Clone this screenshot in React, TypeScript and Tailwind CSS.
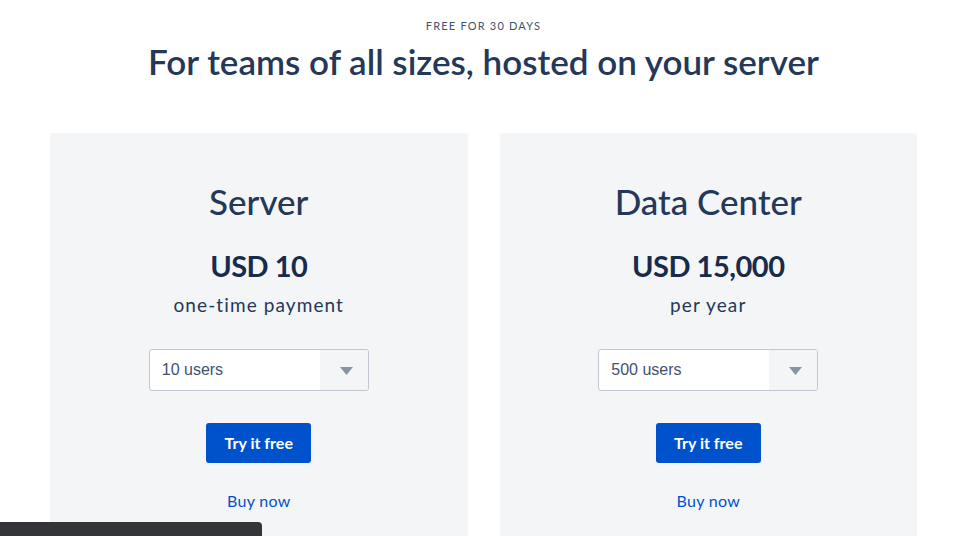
const plans = [
  { name: "Server", price: "USD 10", term: "one-time payment", users: "10 users" },
  { name: "Data Center", price: "USD 15,000", term: "per year", users: "500 users" },
];

function PlanCard({ plan }: { plan: (typeof plans)[number] }) {
  return (
    <div className="flex h-[420px] flex-col items-center rounded-[3px] bg-[#f4f5f7] pt-[42px]">
      <h2 className="text-[35px] font-medium leading-[52px] text-[#253858]">{plan.name}</h2>
      <div className="mt-[18px] text-[29px] font-bold leading-[42px] tracking-[-0.5px] text-[#172b4d]">{plan.price}</div>
      <div className="mt-[4px] text-[19px] leading-[28px] tracking-[1.1px] text-[#253858]">{plan.term}</div>
      <div className="mt-[30px] flex h-[42px] w-[220px] overflow-hidden rounded-[3px] border border-[#c1c7d0] bg-white">
        <div className="flex flex-1 items-center pl-[12px] font-['Liberation_Sans',Arial,sans-serif] text-[16px] text-[#42526e]">
          {plan.users}
        </div>
        <div className="flex w-[48px] items-center justify-center bg-[#f4f5f7] pl-[5px] pt-[2px]">
          <svg width="13" height="8" viewBox="0 0 13 8">
            <path d="M0 0h13L6.5 8z" fill="#8993a4" />
          </svg>
        </div>
      </div>
      <button className="mt-[32px] h-[40px] w-[105px] rounded-[3px] bg-[#0052cc] text-[16px] font-bold text-white">
        Try it free
      </button>
      <a className="mt-[26px] text-[16px] tracking-[0.3px] text-[#0052cc]">Buy now</a>
    </div>
  );
}

export default function App() {
  return (
    <div className="relative h-[536px] overflow-hidden bg-white font-['Lato','Open_Sans',sans-serif]">
      <div className="pt-[19px] text-center">
        <div className="text-[11px] uppercase leading-[14px] tracking-[1.2px] text-[#42526e]">Free for 30 days</div>
        <h1 className="mt-[4px] text-[35px] font-semibold leading-[48px] text-[#253858]">
          For teams of all sizes, hosted on your server
        </h1>
      </div>
      <div className="mt-[48px] grid grid-cols-2 gap-[32px] px-[50px]">
        {plans.map((p) => (
          <PlanCard key={p.name} plan={p} />
        ))}
      </div>
      <div className="absolute left-0 top-[522px] h-[40px] w-[262px] rounded-tr-[4px] bg-[#333538]" />
    </div>
  );
}
